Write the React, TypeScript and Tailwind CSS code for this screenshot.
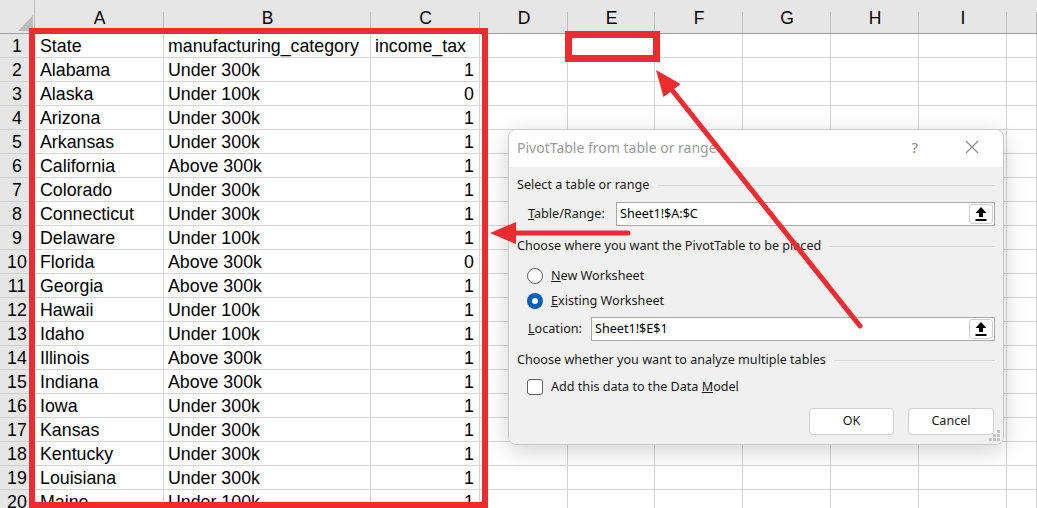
import React from "react";

const rows: [string, string, string][] = [
  ["State", "manufacturing_category", "income_tax"],
  ["Alabama", "Under 300k", "1"],
  ["Alaska", "Under 100k", "0"],
  ["Arizona", "Under 300k", "1"],
  ["Arkansas", "Under 300k", "1"],
  ["California", "Above 300k", "1"],
  ["Colorado", "Under 300k", "1"],
  ["Connecticut", "Under 300k", "1"],
  ["Delaware", "Under 100k", "1"],
  ["Florida", "Above 300k", "0"],
  ["Georgia", "Above 300k", "1"],
  ["Hawaii", "Under 100k", "1"],
  ["Idaho", "Under 100k", "1"],
  ["Illinois", "Above 300k", "1"],
  ["Indiana", "Above 300k", "1"],
  ["Iowa", "Under 300k", "1"],
  ["Kansas", "Under 300k", "1"],
  ["Kentucky", "Under 300k", "1"],
  ["Louisiana", "Under 300k", "1"],
  ["Maine", "Under 100k", "1"],
];

const letters = ["A", "B", "C", "D", "E", "F", "G", "H", "I", ""];
const gridCols =
  "grid grid-cols-[35px_129px_207px_109px_88px_87px_88px_88px_88px_88px_1fr]";

const UploadIcon = () => (
  <svg width="14" height="16" viewBox="0 0 14 16">
    <path d="M7 1 L12.5 7 H9 V11 H5 V7 H1.5 Z" fill="#000" />
    <rect x="1.5" y="13" width="11" height="2" fill="#000" />
  </svg>
);

const RangeInput = ({ value }: { value: string }) => (
  <div className="flex-1 h-[24px] bg-white border border-[#a6a6a6] flex items-center pl-[3px] pr-[1px]">
    <span className="flex-1 text-[12.6px] text-black">{value}</span>
    <div className="w-[24px] h-[20px] rounded-[3px] border border-[#cfcfcf] bg-white flex items-center justify-center">
      <UploadIcon />
    </div>
  </div>
);

const GroupHeading = ({ text }: { text: string }) => (
  <div className="flex items-center gap-[8px] h-[18px]">
    <span className="text-[12.6px] text-[#1a1a1a] whitespace-nowrap">{text}</span>
    <div className="flex-1 h-px bg-[#d9d9d9]" />
  </div>
);

const PivotDialog = () => (
  <div
    className="absolute left-[508px] top-[129px] w-[496px] h-[316px] rounded-[8px] overflow-hidden border border-[#c8c8c8] shadow-[0_6px_24px_rgba(0,0,0,0.18)] flex flex-col"
    style={{ fontFamily: '"Noto Sans", "Open Sans", sans-serif' }}
  >
    {/* title bar */}
    <div className="h-[37px] bg-white flex items-center pl-[8px] pr-[24px] pb-[3px]">
      <span className="flex-1 text-[14px] text-[#9a9a9a]">PivotTable from table or range</span>
      <span className="text-[15px] text-[#8a8a8a] mr-[47px]">?</span>
      <svg width="14" height="14" viewBox="0 0 14 14">
        <path d="M1 1 L13 13 M13 1 L1 13" stroke="#8a8a8a" strokeWidth="1.2" />
      </svg>
    </div>

    {/* body */}
    <div className="flex-1 bg-[#f0f0f0] flex flex-col px-[8px] pt-[9px] relative">
      <GroupHeading text="Select a table or range" />
      <div className="flex items-center mt-[8px] pl-[11px]">
        <span className="w-[88px] text-[12.6px] text-[#1a1a1a]">
          <span className="underline">T</span>able/Range:
        </span>
        <RangeInput value="Sheet1!$A:$C" />
      </div>

      <div className="mt-[11px]">
        <GroupHeading text="Choose where you want the PivotTable to be placed" />
      </div>

      <div className="flex items-center gap-[8px] mt-[12px] pl-[10px] h-[18px]">
        <div className="w-[16px] h-[16px] rounded-full border border-[#5f5f5f] bg-white" />
        <span className="text-[12.6px] text-[#1a1a1a]">
          <span className="underline">N</span>ew Worksheet
        </span>
      </div>
      <div className="flex items-center gap-[8px] mt-[7px] pl-[10px] h-[18px]">
        <div className="w-[16px] h-[16px] rounded-full bg-[#005fb8] flex items-center justify-center">
          <div className="w-[6px] h-[6px] rounded-full bg-white" />
        </div>
        <span className="text-[12.6px] text-[#1a1a1a]">
          <span className="underline">E</span>xisting Worksheet
        </span>
      </div>

      <div className="flex items-center mt-[7px] pl-[11px]">
        <span className="w-[63px] text-[12.6px] text-[#1a1a1a]">
          <span className="underline">L</span>ocation:
        </span>
        <RangeInput value="Sheet1!$E$1" />
      </div>

      <div className="mt-[10px]">
        <GroupHeading text="Choose whether you want to analyze multiple tables" />
      </div>

      <div className="flex items-center gap-[8px] mt-[9px] pl-[10px] h-[18px]">
        <div className="w-[16px] h-[16px] rounded-[3px] border border-[#5f5f5f] bg-white" />
        <span className="text-[12.6px] text-[#1a1a1a]">
          Add this data to the Data <span className="underline">M</span>odel
        </span>
      </div>

      <div className="flex justify-end gap-[14px] mt-[12px] pr-[1px]">
        <button className="w-[85px] h-[27px] rounded-[4px] border border-[#d0d0d0] bg-white text-[12.6px] text-[#1a1a1a]">
          OK
        </button>
        <button className="w-[86px] h-[27px] rounded-[4px] border border-[#d0d0d0] bg-white text-[12.6px] text-[#1a1a1a]">
          Cancel
        </button>
      </div>

      {/* resize grip */}
      <svg className="absolute right-[2px] bottom-[2px]" width="12" height="12" viewBox="0 0 12 12">
        <rect x="8" y="0" width="3" height="3" fill="#c4c4c4" />
        <rect x="4" y="4" width="3" height="3" fill="#c4c4c4" />
        <rect x="8" y="4" width="3" height="3" fill="#c4c4c4" />
        <rect x="0" y="8" width="3" height="3" fill="#c4c4c4" />
        <rect x="4" y="8" width="3" height="3" fill="#c4c4c4" />
        <rect x="8" y="8" width="3" height="3" fill="#c4c4c4" />
      </svg>
    </div>
  </div>
);

const Annotations = () => (
  <svg className="absolute left-0 top-0 pointer-events-none" width="1037" height="508">
    <g stroke="#ee2b2e" strokeWidth="5" strokeLinecap="round">
      <line x1="628" y1="233" x2="512" y2="233" />
      <line x1="860" y1="326" x2="672" y2="90" />
    </g>
    <g fill="#ee2b2e">
      <polygon points="490,233 516,222 516,244" />
      <polygon points="656,70 680.5,84 663.5,97" />
    </g>
  </svg>
);

const App = () => {
  return (
    <div
      className="relative w-[1037px] h-[508px] overflow-hidden bg-white"
      style={{ fontFamily: '"Liberation Sans", Arial, sans-serif' }}
    >
      {/* column headers */}
      <div className={`${gridCols} h-[34px] bg-[#e6e6e6] border-b border-[#9e9e9e]`}>
        <div className="relative border-r border-[#bdbdbd]">
          <svg className="absolute left-[18px] top-[15px]" width="15" height="16" viewBox="0 0 15 16">
            <polygon points="15,0 15,16 0,16" fill="#bcbcbc" />
          </svg>
        </div>
        {letters.map((l, i) => (
          <div key={i} className="flex items-end justify-center pb-[2px] text-[17.5px] text-black relative">
            <div className="absolute right-0 top-[12px] bottom-0 w-px bg-[#bdbdbd]" />
            {l}
          </div>
        ))}
      </div>

      {/* rows */}
      {rows.map((r, i) => (
        <div key={i} className={`${gridCols} h-[24px] text-[17.8px] leading-none text-black`}>
          <div className="bg-[#e6e6e6] border-r border-b border-r-[#9e9e9e] border-b-[#d0d0d0] flex items-center justify-center pt-[3px]">
            {i + 1}
          </div>
          <div className="border-r border-b border-[#d4d4d4] flex items-center pl-[5px] pt-[3px] whitespace-nowrap">{r[0]}</div>
          <div className="border-r border-b border-[#d4d4d4] flex items-center pl-[4px] pt-[3px] whitespace-nowrap">{r[1]}</div>
          <div
            className={`border-r border-b border-[#d4d4d4] flex items-center pt-[3px] whitespace-nowrap ${
              i === 0 ? "pl-[4px]" : "justify-end pr-[5px]"
            }`}
          >
            {r[2]}
          </div>
          {Array.from({ length: 7 }).map((_, j) => (
            <div key={j} className="border-r border-b border-[#d4d4d4]" />
          ))}
        </div>
      ))}

      {/* red highlight boxes */}
      <div className="absolute left-[29px] top-[28px] w-[459px] h-[480px] border-[6px] border-[#ee2b2e] pointer-events-none" />
      <div className="absolute left-[565px] top-[31px] w-[95px] h-[31px] border-[7px] border-[#ee2b2e] pointer-events-none" />

      <PivotDialog />
      <Annotations />
    </div>
  );
};

export default App;
